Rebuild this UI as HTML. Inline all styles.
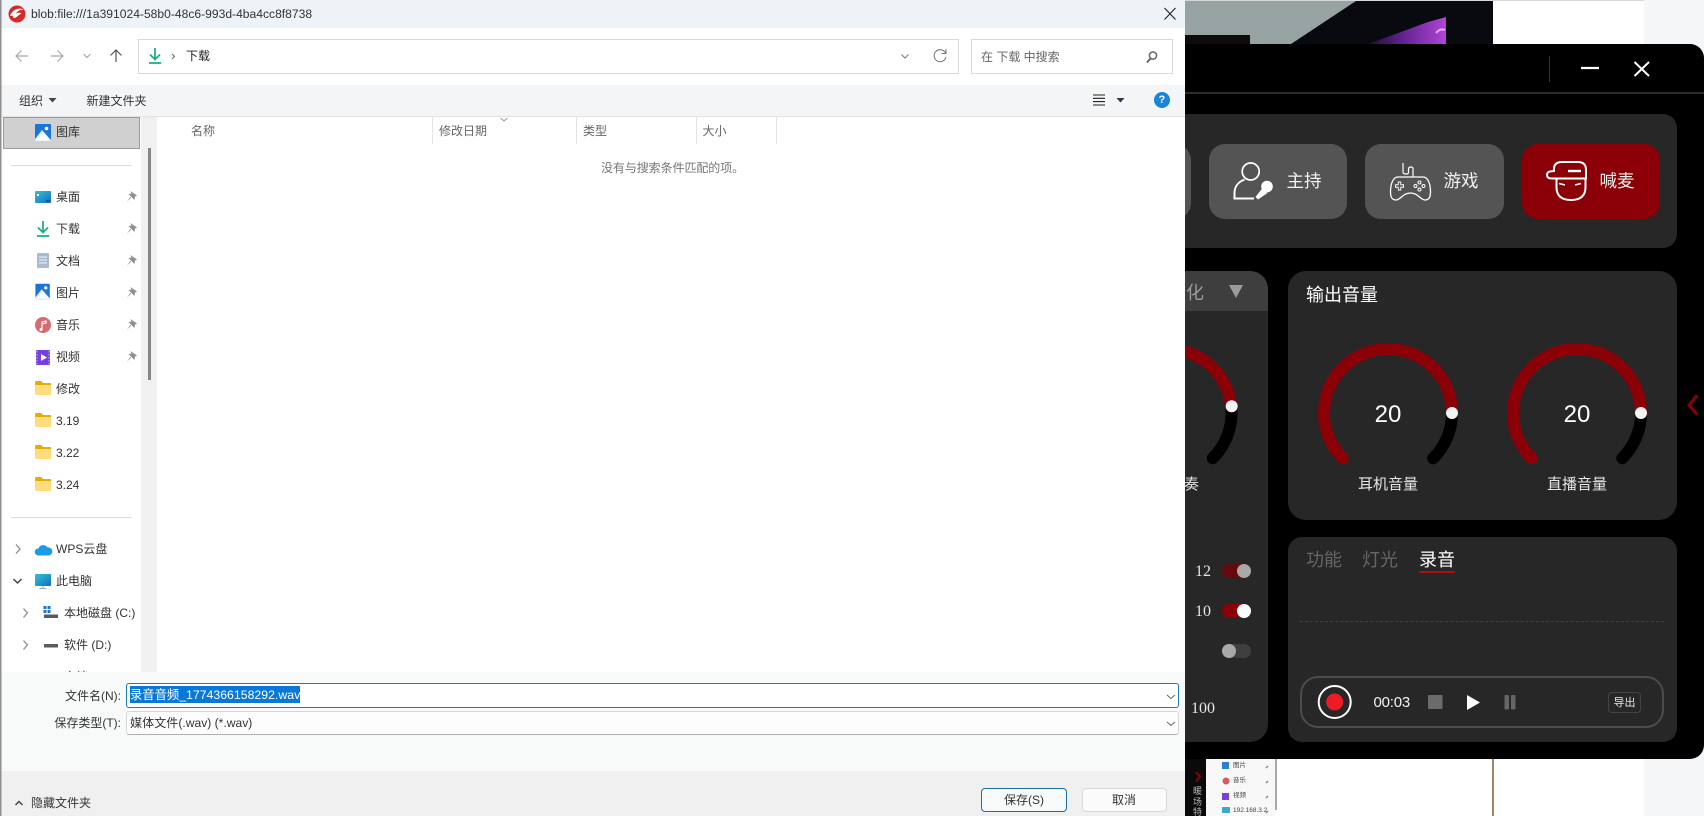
<!DOCTYPE html>
<html><head><meta charset="utf-8"><title>保存对话框</title>
<style>
*{box-sizing:border-box;margin:0;padding:0}
html,body{width:1704px;height:816px;overflow:hidden;background:#fff;font-family:"Liberation Sans","Noto Sans CJK SC",sans-serif}
body{position:relative}
.a{position:absolute}
.t{position:absolute;white-space:nowrap;line-height:20px;height:20px;font-size:12px;color:#333}
.c{transform:translateX(-50%)}
svg{position:absolute;left:0;top:0}
.sw{position:absolute;width:29px;height:14px;border-radius:7px}
.sw i{position:absolute;top:0;width:14px;height:14px;border-radius:50%}
</style></head><body>

<!-- background -->
<div class="a" style="left:1185px;top:0;width:308px;height:44px;background:#96a3a2"></div>
<div class="a" style="left:1493px;top:0;width:151px;height:44px;background:#fff"></div>
<div class="a" style="left:1644px;top:0;width:60px;height:816px;background:#f5f6f8"></div>
<div class="a" style="left:1206px;top:755px;width:438px;height:61px;background:#fff"></div>
<div class="a" style="left:1206px;top:755px;width:70px;height:61px;background:#f8f8f8"></div>
<div class="a" style="left:1275px;top:755px;width:1.5px;height:55px;background:#a8a8a8"></div>
<div class="a" style="left:1185px;top:755px;width:21px;height:61px;background:#0a0a0a;overflow:hidden">
  <div class="a" style="left:8px;top:31px;width:10px;font-size:9px;line-height:10.5px;color:#bbb">暖场特效</div>
</div>
<div class="a" style="left:1492px;top:755px;width:1.5px;height:61px;background:#a5826a"></div>
<svg width="1704" height="816" viewBox="0 0 1704 816">
<defs><linearGradient id="pu" x1="0" y1="0" x2="1" y2="0"><stop offset="0" stop-color="#1c0c30"/><stop offset=".4" stop-color="#5a2088"/><stop offset="1" stop-color="#b244d8"/></linearGradient></defs>
<rect x="1185" y="0" width="459" height="1" fill="#d8d8d8"/>
<polygon points="1291,44 1356,1 1493,1 1493,44" fill="#090910"/>
<rect x="1185" y="35" width="65" height="9" fill="#0c0c0c"/>
<polygon points="1368,44 1428,22 1446,17 1446,44" fill="url(#pu)"/>
<path d="M1436 33q4-5 9-3" stroke="#e6a8f0" stroke-width="2" fill="none"/>
<!-- thumbnail icons -->
<path d="M1196 772l4 4.500-4 5" stroke="#8a0006" stroke-width="2" fill="none"/>
<rect x="1222" y="762" width="7" height="7" fill="#2f7fd6"/>
<circle cx="1226" cy="781" r="3.500" fill="#d65b5b"/>
<rect x="1222" y="793" width="7" height="7" fill="#7a3fe0"/>
<rect x="1222" y="807" width="8" height="6" fill="#3aa8d0"/>
<path d="M1266 768l2-2M1266 783l2-2M1266 798l2-2M1266 813l2-2" stroke="#888" stroke-width="1.500"/>
</svg>
<div class="t" style="left:1233px;top:756px;font-size:6.500px;color:#444">图片</div>
<div class="t" style="left:1233px;top:771px;font-size:6.500px;color:#444">音乐</div>
<div class="t" style="left:1233px;top:786px;font-size:6.500px;color:#444">视频</div>
<div class="t" style="left:1233px;top:801px;font-size:6.500px;color:#444">192.168.3.2</div>

<!-- app window -->
<div class="a" style="left:1100px;top:44px;width:604px;height:715px;background:#000;border-radius:14px"></div>
<div class="a" style="left:1100px;top:92px;width:604px;height:2px;background:#2c2c2c"></div>
<div class="a" style="left:1549px;top:56px;width:1px;height:26px;background:#333"></div>
<div class="a" style="left:1100px;top:114px;width:577px;height:134px;background:#272727;border-radius:14px"></div>
<div class="a" style="left:1100px;top:144px;width:91px;height:75px;background:#545454;border-radius:16px"></div>
<div class="a" style="left:1209px;top:144px;width:138px;height:75px;background:#545454;border-radius:16px"></div>
<div class="a" style="left:1365px;top:144px;width:139px;height:75px;background:#545454;border-radius:16px"></div>
<div class="a" style="left:1522px;top:144px;width:138px;height:75px;background:#8a0006;border-radius:16px"></div>
<div class="a" style="left:1100px;top:271px;width:168px;height:471px;background:#272727;border-radius:18px;overflow:hidden">
  <div class="a" style="left:0;top:0;width:168px;height:40px;background:#3e3e3e"></div>
</div>
<div class="a" style="left:1288px;top:271px;width:389px;height:249px;background:#272727;border-radius:18px"></div>
<div class="a" style="left:1288px;top:537px;width:389px;height:205px;background:#272727;border-radius:14px"></div>
<div class="a" style="left:1300px;top:676px;width:364px;height:52px;border:2px solid #4c4c4c;border-radius:18px"></div>
<div class="a" style="left:1608px;top:692px;width:33px;height:21px;border:1px solid #444;border-radius:4px"></div>
<div class="a" style="left:1419px;top:571px;width:36px;height:2px;background:#b01015"></div>
<div class="a" style="left:1300px;top:621px;width:364px;height:0;border-top:1px dashed #404040"></div>

<svg width="1704" height="816" viewBox="0 0 1704 816">
<!-- window controls -->
<path d="M1581 68h18" stroke="#fff" stroke-width="2.200"/>
<path d="M1634.500 62l14.500 14M1649 62l-14.500 14" stroke="#fff" stroke-width="2"/>
<!-- triangle -->
<polygon points="1229,285 1243,285 1236,298" fill="#9b9b9b"/>
<!-- host icon -->
<circle cx="1250.700" cy="171.500" r="8.500" fill="none" stroke="#fff" stroke-width="1.700"/>
<path d="M1244.500 179.500C1238 182 1234.500 187 1234.500 193V198.500H1254" fill="none" stroke="#fff" stroke-width="2"/>
<circle cx="1267" cy="186.500" r="5.800" fill="#fff"/>
<path d="M1262.500 188L1255.500 197l2.500 2.500L1267.500 193z" fill="#fff"/>
<!-- game icon -->
<path d="M1403 163V172Q1403 174 1406 174T1408.500 172V169Q1408.500 167 1411 167T1413 170V177" fill="none" stroke="#fff" stroke-width="1.200"/>
<path d="M1398 177H1423C1428 177 1430.500 184 1430.500 192C1430.500 198 1428 200 1425 200C1420.500 200 1418 193 1410.500 193C1403 193 1400.500 200 1396 200C1392.500 200 1390.500 198 1390.500 192C1390.500 184 1393 177 1398 177Z" fill="none" stroke="#fff" stroke-width="1.300"/>
<path d="M1399.500 181.500v9M1395 186h9" stroke="#fff" stroke-width="3.400"/>
<path d="M1399.500 182.500v7M1396 186h7" stroke="#545454" stroke-width="1.600"/>
<g fill="none" stroke="#fff" stroke-width="1"><circle cx="1419.500" cy="182.500" r="1.500"/><circle cx="1415.500" cy="186" r="1.500"/><circle cx="1423.500" cy="186" r="1.500"/><circle cx="1419.500" cy="189.500" r="1.500"/></g>
<!-- cap icon -->
<path d="M1554 171V169Q1554 162 1562 162H1578Q1586 162 1586 170V178.500H1552Q1547 178.500 1547 175Q1547 172 1550 171.500Z" fill="none" stroke="#fff" stroke-width="2"/>
<path d="M1568 171H1581" stroke="#fff" stroke-width="2.400"/>
<path d="M1556.500 179V187Q1556.500 200 1571 200Q1585.500 200 1585.500 187V179" fill="none" stroke="#fff" stroke-width="2"/>
<path d="M1559 183.500l6 1.500M1581 183.500l-6 1.500" stroke="#fff" stroke-width="1.600"/>
<!-- gauges -->
<g fill="none" stroke-width="12" stroke-linecap="round">
<path d="M1452 413A64 64 0 0 1 1433.250 458.250" stroke="#000"/>
<path d="M1342.750 458.250A64 64 0 1 1 1452 413" stroke="#8a0006"/>
<path d="M1641 413A64 64 0 0 1 1622.250 458.250" stroke="#000"/>
<path d="M1531.750 458.250A64 64 0 1 1 1641 413" stroke="#8a0006"/>
<path d="M1231.200 406.300A64 64 0 0 1 1212.750 458.250" stroke="#000"/>
<path d="M1122.250 458.250A64 64 0 1 1 1231.200 406.300" stroke="#8a0006"/>
</g>
<circle cx="1452" cy="413" r="6" fill="#f4f4f4"/>
<circle cx="1641" cy="413" r="6" fill="#f4f4f4"/>
<circle cx="1231.700" cy="406.300" r="6" fill="#f4f4f4"/>
<!-- chevron -->
<path d="M1697 395.500l-8 9.500 8 9.500" fill="none" stroke="#8a0006" stroke-width="3"/>
<!-- record -->
<circle cx="1334.700" cy="702" r="16" fill="none" stroke="#fff" stroke-width="2"/>
<circle cx="1334.700" cy="702" r="8.500" fill="#ed1c24"/>
<rect x="1428" y="695" width="14.500" height="14" rx="1" fill="#6b6b6b"/>
<polygon points="1467,695 1480,702.500 1467,710" fill="#fff"/>
<rect x="1504.500" y="695" width="4.500" height="14.500" rx="1" fill="#666"/>
<rect x="1511" y="695" width="4.500" height="14.500" rx="1" fill="#666"/>
</svg>

<div class="t c" style="left:1304px;top:171px;font-size:17.500px;color:#f2f2f2;">主持</div>
<div class="t c" style="left:1461px;top:171px;font-size:17.500px;color:#f2f2f2">游戏</div>
<div class="t c" style="left:1617px;top:171px;font-size:17.500px;color:#f2f2f2">喊麦</div>
<div class="t" style="left:1186px;top:283px;font-size:18px;color:#9b9b9b">化</div>
<div class="t" style="left:1306px;top:285px;font-size:18px;color:#fff">输出音量</div>
<div class="t c" style="left:1388px;top:405px;font-size:24px;color:#fff">20</div>
<div class="t c" style="left:1577px;top:405px;font-size:24px;color:#fff">20</div>
<div class="t c" style="left:1388px;top:475px;font-size:15px;color:#e6e6e6">耳机音量</div>
<div class="t c" style="left:1577px;top:475px;font-size:15px;color:#e6e6e6">直播音量</div>
<div class="t" style="left:1184px;top:475px;font-size:15px;color:#e6e6e6">奏</div>
<div class="t" style="left:1306px;top:550px;font-size:18px;color:#666">功能</div>
<div class="t" style="left:1362px;top:550px;font-size:18px;color:#666">灯光</div>
<div class="t" style="left:1419px;top:550px;font-size:18px;color:#fff">录音</div>
<div class="t" style="left:1373.500px;top:693px;font-size:15px;color:#f2f2f2;letter-spacing:-.2px">00:03</div>
<div class="t c" style="left:1624.500px;top:693px;font-size:11px;color:#e6e6e6">导出</div>
<div class="t" style="left:1195px;top:562px;font-size:16px;color:#e6e6e6;font-family:'Liberation Serif',serif">12</div>
<div class="t" style="left:1195px;top:602px;font-size:16px;color:#e6e6e6;font-family:'Liberation Serif',serif">10</div>
<div class="t" style="left:1191px;top:699px;font-size:16px;color:#e6e6e6;font-family:'Liberation Serif',serif">100</div>
<div class="sw" style="left:1222px;top:564px;background:#660a0e"><i style="right:0;background:#a8a8a8"></i></div>
<div class="sw" style="left:1222px;top:604px;background:#8a0006"><i style="right:0;background:#fff"></i></div>
<div class="sw" style="left:1222px;top:644px;background:#3f3f3f"><i style="left:0;background:#a8a8a8"></i></div>

<!-- dialog -->
<div class="a" style="left:0;top:0;width:1185px;height:816px;background:#fff;overflow:hidden">
  <div class="a" style="left:0;top:0;width:1185px;height:28px;background:#eef3f8"></div>
  <div class="a" style="left:0;top:85px;width:1185px;height:31px;background:#f4f5f7"></div>
  <div class="a" style="left:0;top:116px;width:1185px;height:1px;background:#e4e4e4"></div>
  <div class="a" style="left:138px;top:39px;width:821px;height:35px;border:1px solid #d9d9d9;background:#fff"></div>
  <div class="a" style="left:971px;top:39px;width:202px;height:35px;border:1px solid #d9d9d9;background:#fff"></div>
  <!-- sidebar -->
  <div class="a" style="left:141px;top:117px;width:16px;height:555px;background:#f0f0f0"></div>
  <div class="a" style="left:148px;top:148px;width:2.500px;height:232px;background:#868686"></div>
  <div class="a" style="left:3px;top:117px;width:137px;height:32px;background:#d0d0d0;border:1px solid #9a9a9a"></div>
  <div class="a" style="left:11px;top:165px;width:121px;height:1px;background:#dcdcdc"></div>
  <div class="a" style="left:11px;top:517px;width:121px;height:1px;background:#dcdcdc"></div>
  <!-- header dividers -->
  <div class="a" style="left:432px;top:117px;width:1px;height:27px;background:#e3e3e3"></div>
  <div class="a" style="left:576px;top:117px;width:1px;height:27px;background:#e3e3e3"></div>
  <div class="a" style="left:696px;top:117px;width:1px;height:27px;background:#e3e3e3"></div>
  <div class="a" style="left:776px;top:117px;width:1px;height:27px;background:#e3e3e3"></div>
  <!-- footer -->
  <div class="a" style="left:0;top:672px;width:1185px;height:99px;background:#f8f9f9"></div>
  <div class="a" style="left:0;top:771px;width:1185px;height:45px;background:#f0f0f0"></div>
  <div class="a" style="left:126px;top:683px;width:1053px;height:25px;border:1px solid #1680aa;border-radius:3px;background:#fff"></div>
  <div class="a" style="left:130px;top:686px;width:170px;height:17px;background:#0a78d7"></div>
  <div class="a" style="left:126px;top:711px;width:1053px;height:24px;border:1px solid #d6d6d6;border-bottom:1.500px solid #b0b0b0;border-radius:3px;background:#fdfdfd"></div>
  <div class="a" style="left:981px;top:788px;width:86px;height:24px;border:1.500px solid #1a6fa8;border-radius:4px;background:#f8f9f9"></div>
  <div class="a" style="left:1082px;top:788px;width:85px;height:24px;border:1px solid #d8d8d8;border-radius:4px;background:#fbfbfb"></div>

  <svg width="1185" height="816" viewBox="0 0 1185 816">
  <defs>
    <g id="folder"><path d="M0 1.500Q0 0 1.500 0H6l2 2h7q1 0 1 1v10H0z" fill="#e6ab0a"/><path d="M0 4h16v9q0 1-1 1H1q-1 0-1-1z" fill="#ffdd7f"/></g>
    <g id="pin" fill="#8c9098"><path d="M-1.500-6L5-1.500 3-.5 2.500 3-3.500-3-.5-3.500z"/><path d="M-1-.5L-5.500 5-1 1z"/></g>
    <g id="pic"><rect width="16" height="17" rx="1" fill="#1976d8"/><path d="M0 15L7 6l9 10v1H0z" fill="#d9ecfb"/><path d="M1 16.500L8 8l7 8.500z" fill="#fff"/><circle cx="11.500" cy="4.500" r="1.800" fill="#fff"/></g>
    <g id="dl"><path d="M6 0v11M1 6.500l5 5 5-5" fill="none" stroke="#1bb088" stroke-width="1.800"/><path d="M0 15h12" stroke="#1bb088" stroke-width="1.800"/></g>
    <linearGradient id="tl" x1="0" y1="0" x2="1" y2="1"><stop offset="0" stop-color="#35c3d0"/><stop offset="1" stop-color="#0f6fc8"/></linearGradient>
  </defs>
  <rect x="0" y="0" width="1.500" height="816" fill="#8f8f8f"/>
  <!-- app icon -->
  <circle cx="17" cy="14" r="8.500" fill="#d42a2a"/><path d="M10 16c2-6 8-9 14-6.500-3 0-6.500 1-8 4 2-1 4.500-1 5.500 0-3 1-5 5-8.500 4.500 1-2-1-3-3-2z" fill="#fff"/>
  <!-- nav -->
  <g fill="none" stroke="#a8a8a8" stroke-width="1.200">
    <path d="M28 56H16M21.500 50.500L16 56l5.500 5.500"/>
    <path d="M51 56h12M57.500 50.500L63 56l-5.500 5.500"/>
    <path d="M83.500 54l3.500 3.500 3.500-3.500"/>
  </g>
  <path d="M116 62V50M110.500 55.500L116 50l5.500 5.500" fill="none" stroke="#555" stroke-width="1.200"/>
  <use href="#dl" x="149" y="48"/>
  <path d="M172 54l2.500 2.500-2.500 2.500" fill="none" stroke="#666" stroke-width="1"/>
  <path d="M901.500 54.500L905 58l3.500-3.500" fill="none" stroke="#777" stroke-width="1"/>
  <path d="M945.500 53a6 6 0 1 0 .5 4M946 49v4.500h-4.500" fill="none" stroke="#777" stroke-width="1"/>
  <circle cx="1153" cy="55.500" r="3.600" fill="none" stroke="#666" stroke-width="1.500"/><path d="M1150.500 58.500L1147 62.500" stroke="#666" stroke-width="2"/>
  <!-- toolbar -->
  <polygon points="48.500,98 56.500,98 52.500,102.500" fill="#444"/>
  <path d="M1093 95h12M1093 98.300h12M1093 101.600h12M1093 105h12" stroke="#222" stroke-width="1.100"/>
  <polygon points="1116.500,98 1124.500,98 1120.500,102.500" fill="#2d3a50"/>
  <circle cx="1162" cy="100" r="8" fill="#1a84d8"/>
  <path d="M500.500 118l3.500 3 3.500-3" fill="none" stroke="#999" stroke-width="1"/>
  <!-- sidebar icons -->
  <use href="#pic" x="35" y="124"/>
  <rect x="35" y="191" width="16" height="12" rx="1" fill="url(#tl)"/><rect x="37" y="194" width="2" height="2" fill="#fff"/><rect x="46" y="200" width="4" height="1.500" fill="#0a4c88"/>
  <use href="#dl" x="37" y="221"/>
  <rect x="37" y="253" width="12" height="15" rx="1" fill="#a9bbd0"/><path d="M39 257h8M39 260h8M39 263h8" stroke="#eef3f8" stroke-width="1"/>
  <use href="#pic" x="36" y="286" transform="translate(3 26.400) scale(.9)"/>
  <circle cx="43" cy="325" r="8" fill="#d66b6e"/><path d="M42 329.500V322l4-1v2l-3 .800" fill="none" stroke="#fff" stroke-width="1.200"/><circle cx="41" cy="329.500" r="1.500" fill="#fff"/>
  <rect x="36" y="350" width="14" height="15" rx="1" fill="#7540dd"/><polygon points="41,354 47,357.500 41,361" fill="#fff"/><path d="M37 351v13M49 351v13" stroke="#cdb8f7" stroke-width="1" stroke-dasharray="1.500 1.500"/>
  <use href="#folder" x="35" y="381"/>
  <use href="#folder" x="35" y="413"/>
  <use href="#folder" x="35" y="445"/>
  <use href="#folder" x="35" y="477"/>
  <use href="#pin" x="132" y="197"/><use href="#pin" x="132" y="229"/><use href="#pin" x="132" y="261"/><use href="#pin" x="132" y="293"/><use href="#pin" x="132" y="325"/><use href="#pin" x="132" y="357"/>
  <!-- tree -->
  <path d="M16 544.500l4 4.500-4 4.500" fill="none" stroke="#8a8a8a" stroke-width="1.300"/>
  <path d="M13.500 579l4 4 4-4" fill="none" stroke="#444" stroke-width="1.500"/>
  <path d="M23.500 608.500l4 4.500-4 4.500M23.500 640.500l4 4.500-4 4.500" fill="none" stroke="#8a8a8a" stroke-width="1.300"/>
  <path d="M38 555.500a3.500 3.500 0 0 1 .5-7 5 5 0 0 1 9-1 4 4 0 0 1 1.500 8z" fill="#1a9be8"/>
  <rect x="35" y="574" width="16" height="12" rx="1" fill="url(#tl)"/><path d="M43 586v2M39.500 588.500h7" stroke="#9ab" stroke-width="1"/>
  <g fill="#1678c8"><rect x="43.500" y="606" width="3" height="3"/><rect x="47.500" y="606" width="3" height="3"/><rect x="43.500" y="610" width="3" height="3"/><rect x="47.500" y="610" width="3" height="3"/></g>
  <rect x="44" y="614.500" width="14" height="3.500" fill="#5a5a5a"/>
  <rect x="44" y="644" width="14" height="3.500" rx=".5" fill="#5a5a5a"/>
  <!-- close -->
  <path d="M1164.500 8l11 11.500M1175.500 8l-11 11.500" stroke="#222" stroke-width="1.100"/>
  <!-- combos -->
  <path d="M1167 695l4 3.500 4-3.500M1167 722l4 3.500 4-3.500" fill="none" stroke="#666" stroke-width="1"/>
  <path d="M15.500 805l3.500-3.500 3.500 3.500" fill="none" stroke="#444" stroke-width="1.500"/>
  </svg>

  <div class="t" style="left:31px;top:4px;font-size:12.100px;color:#333">blob:file:///1a391024-58b0-48c6-993d-4ba4cc8f8738</div>
  <div class="t" style="left:186px;top:46px;color:#222">下载</div>
  <div class="t" style="left:981px;top:47px;color:#666">在 下载 中搜索</div>
  <div class="t" style="left:19px;top:91px;color:#333">组织</div>
  <div class="t" style="left:86.500px;top:91px;color:#333">新建文件夹</div>
  <div class="t" style="left:1158.500px;top:90px;color:#fff;font-weight:bold;font-size:11px">?</div>
  <div class="t" style="left:191px;top:120.500px;color:#666">名称</div>
  <div class="t" style="left:439px;top:120.500px;color:#666">修改日期</div>
  <div class="t" style="left:583px;top:120.500px;color:#666">类型</div>
  <div class="t" style="left:702.500px;top:120.500px;color:#666">大小</div>
  <div class="t" style="left:601px;top:158px;color:#777;letter-spacing:-.08px">没有与搜索条件匹配的项。</div>

  <div class="t" style="left:56px;top:122px">图库</div>
  <div class="t" style="left:56px;top:187px">桌面</div>
  <div class="t" style="left:56px;top:219px">下载</div>
  <div class="t" style="left:56px;top:251px">文档</div>
  <div class="t" style="left:56px;top:283px">图片</div>
  <div class="t" style="left:56px;top:315px">音乐</div>
  <div class="t" style="left:56px;top:347px">视频</div>
  <div class="t" style="left:56px;top:379px">修改</div>
  <div class="t" style="left:56px;top:411px">3.19</div>
  <div class="t" style="left:56px;top:443px">3.22</div>
  <div class="t" style="left:56px;top:475px">3.24</div>
  <div class="t" style="left:56px;top:539px">WPS云盘</div>
  <div class="t" style="left:56px;top:571px">此电脑</div>
  <div class="t" style="left:64px;top:603px">本地磁盘 (C:)</div>
  <div class="t" style="left:64px;top:635px">软件 (D:)</div>
  <div class="a" style="left:60px;top:660px;width:40px;height:12px;overflow:hidden"><div class="t" style="left:4px;top:7px">文档</div></div>

  <div class="t" style="left:64px;top:686px;width:57px;text-align:right">文件名(N):</div>
  <div class="t" style="left:40px;top:713px;width:81px;text-align:right">保存类型(T):</div>
  <div class="t" style="left:130px;top:685px;font-size:12.300px;color:#fff">录音音频_1774366158292.wav</div>
  <div class="t" style="left:130px;top:713px;font-size:12.100px;color:#333">媒体文件(.wav) (*.wav)</div>
  <div class="t" style="left:31px;top:793px;color:#333">隐藏文件夹</div>
  <div class="t c" style="left:1024px;top:790px;color:#333">保存(S)</div>
  <div class="t c" style="left:1124px;top:790px;color:#333">取消</div>
</div>
</body></html>
